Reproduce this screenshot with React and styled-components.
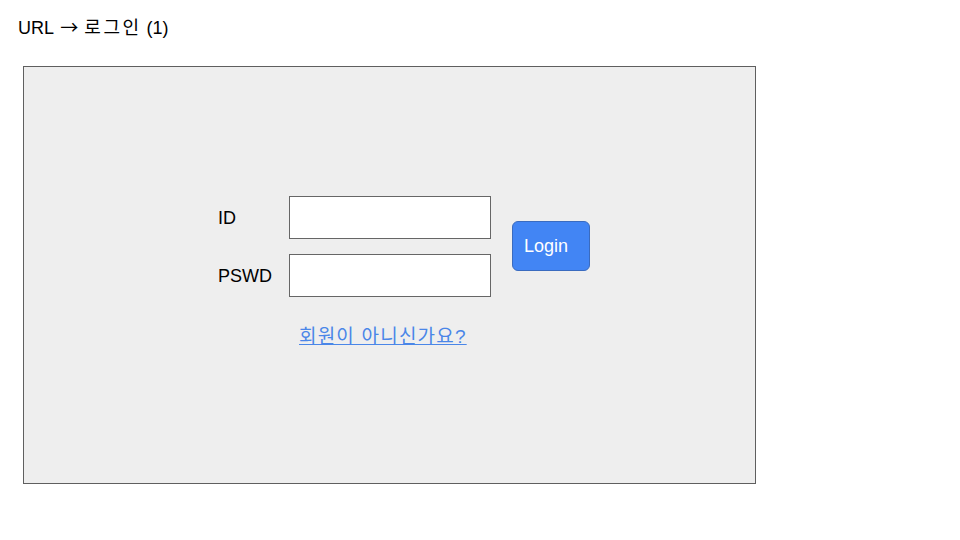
import styled, { createGlobalStyle } from "styled-components";

const GlobalStyle = createGlobalStyle`
  body {
    margin: 0;
    background: #ffffff;
    font-family: "Liberation Sans", "Noto Sans CJK KR", sans-serif;
    color: #000;
  }
`;

const Page = styled.div`
  width: 960px;
  height: 540px;
  padding: 17px 0 0 18px;
  box-sizing: border-box;
`;

const Title = styled.div`
  height: 22px;
  font-size: 18px;
  line-height: 22px;
  margin-bottom: 27px;
`;

const Arrow = styled.span`
  font-family: "Noto Sans CJK KR", sans-serif;
  font-size: 18px;
  line-height: 1;
  margin: 0 1px 0 2px;
`;

const Hangul = styled.span`
  letter-spacing: ${(props) => props.$spacing || 0}px;
`;

const Panel = styled.div`
  margin-left: 5px;
  width: 733px;
  height: 418px;
  box-sizing: border-box;
  border: 1px solid #5f5f5f;
  background: #eeeeee;
  padding: 129px 0 0 194px;
`;

const FormRow = styled.div`
  display: flex;
  align-items: center;
`;

const Fields = styled.div`
  display: grid;
  grid-template-columns: 71px 202px;
  row-gap: 15px;
  align-items: center;
`;

const Label = styled.label`
  font-size: 18px;
  line-height: 22px;
`;

const Input = styled.input`
  width: 202px;
  height: 43px;
  box-sizing: border-box;
  border: 1px solid #666666;
  background: #ffffff;
  margin: 0;
  padding: 0 6px;
  outline: none;
`;

const LoginButton = styled.button`
  margin: -1px 0 0 21px;
  width: 78px;
  height: 50px;
  box-sizing: border-box;
  border: 1px solid #3a6bbf;
  border-radius: 6px;
  background: #4285f4;
  color: #ffffff;
  font-family: inherit;
  font-size: 18px;
  text-align: left;
  padding: 0 0 0 11px;
`;

const JoinLink = styled.a`
  display: inline-block;
  margin: 29px 0 0 81px;
  font-size: 19px;
  line-height: 22px;
  letter-spacing: 1.2px;
  color: #4a86e8;
  text-decoration: underline;
  cursor: pointer;
`;

export default function App() {
  return (
    <>
      <GlobalStyle />
      <Page>
        <Title>
          URL <Arrow>→</Arrow> <Hangul $spacing={2.5}>로그인</Hangul> (1)
        </Title>
        <Panel>
          <FormRow>
            <Fields>
              <Label>ID</Label>
              <Input />
              <Label>PSWD</Label>
              <Input type="password" />
            </Fields>
            <LoginButton>Login</LoginButton>
          </FormRow>
          <JoinLink>회원이 아니신가요?</JoinLink>
        </Panel>
      </Page>
    </>
  );
}
